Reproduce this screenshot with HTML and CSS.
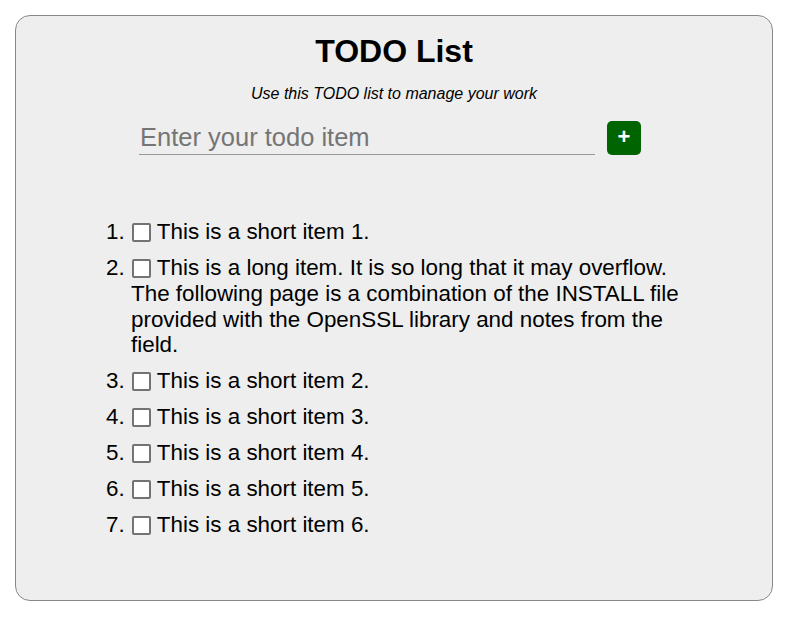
FILE: index.html
```html
<!DOCTYPE html>
<html>
<head>
<meta charset="utf-8">
<title>TODO List</title>
<link rel="stylesheet" href="styles.css">
</head>
<body>
<div class="card">
  <h1 class="title">TODO List</h1>
  <p class="subtitle">Use this TODO list to manage your work</p>
  <div class="entry">
    <input class="entry-input" type="text" placeholder="Enter your todo item">
    <button class="add-btn" type="button">+</button>
  </div>
  <ol class="todo-list">
    <li class="todo-item"><input class="check" type="checkbox"> This is a short item 1.</li>
    <li class="todo-item"><input class="check" type="checkbox"> This is a long item. It is so long that it may overflow. The following page is a combination of the INSTALL file provided with the OpenSSL library and notes from the field.</li>
    <li class="todo-item"><input class="check" type="checkbox"> This is a short item 2.</li>
    <li class="todo-item"><input class="check" type="checkbox"> This is a short item 3.</li>
    <li class="todo-item"><input class="check" type="checkbox"> This is a short item 4.</li>
    <li class="todo-item"><input class="check" type="checkbox"> This is a short item 5.</li>
    <li class="todo-item"><input class="check" type="checkbox"> This is a short item 6.</li>
  </ol>
</div>
</body>
</html>
```
FILE: styles.css
```css
html, body {
  margin: 0;
  padding: 0;
  background: #ffffff;
}
body {
  font-family: "Liberation Sans", Arial, sans-serif;
  color: #000;
}
.card {
  box-sizing: border-box;
  width: 758px;
  height: 586px;
  margin: 15px 0 0 15px;
  padding-top: 17px;
  background: #eeeeee;
  border: 1px solid #888888;
  border-radius: 15px;
}
.title {
  margin: 0;
  font-size: 32px;
  font-weight: bold;
  text-align: center;
  line-height: 37px;
}
.subtitle {
  margin: 15px 0 0 0;
  font-size: 16px;
  font-style: italic;
  text-align: center;
  line-height: 18px;
}
.entry {
  display: flex;
  align-items: center;
  gap: 12px;
  margin-top: 18px;
  padding-left: 123px;
}
.entry-input {
  box-sizing: border-box;
  width: 456px;
  height: 34px;
  padding: 0 0 0 1px;
  border: none;
  border-bottom: 1px solid #999999;
  background: transparent;
  font-family: "Liberation Sans", Arial, sans-serif;
  font-size: 25.5px;
  color: #000;
  outline: none;
}
.entry-input::placeholder {
  color: #757575;
}
.add-btn {
  box-sizing: border-box;
  width: 34px;
  height: 34px;
  padding: 0 0 3px 0;
  border: none;
  border-radius: 5px;
  background: #006400;
  color: #ffffff;
  font-family: "Liberation Sans", Arial, sans-serif;
  font-size: 22px;
  font-weight: bold;
  line-height: 1;
}
.todo-list {
  width: 564px;
  margin: 64px 0 0 0;
  padding: 0 0 0 115px;
  font-size: 22.4px;
  line-height: 25.8px;
}
.todo-item {
  margin-bottom: 10.2px;
}
.check {
  -webkit-appearance: none;
  appearance: none;
  box-sizing: border-box;
  width: 19px;
  height: 19px;
  margin: 0 0 0 1px;
  border: 2px solid #737373;
  border-radius: 2px;
  background: #ffffff;
  vertical-align: -3px;
}
```
